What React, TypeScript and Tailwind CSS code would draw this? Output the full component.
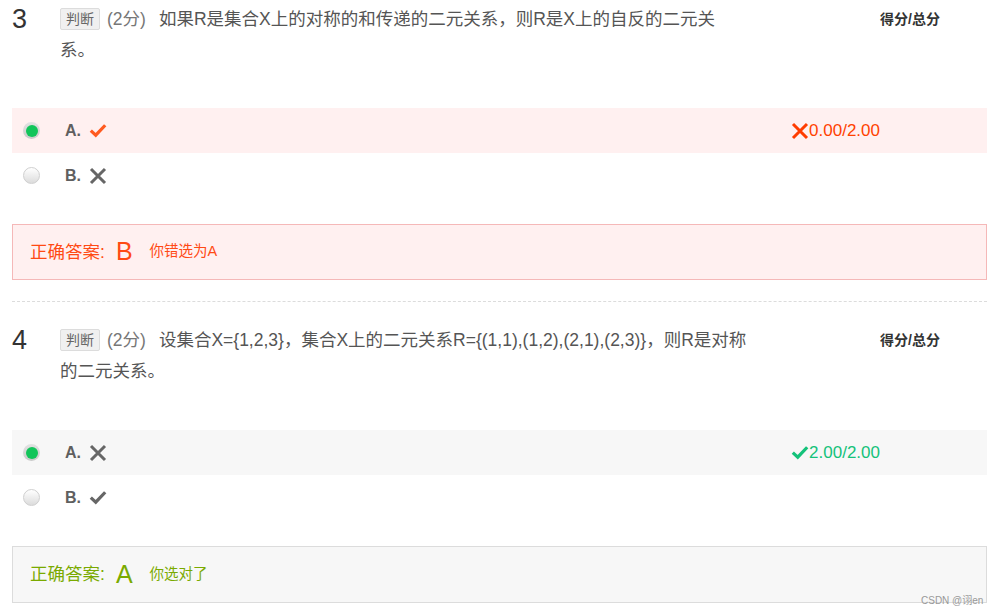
import React from "react";

const FONT = '"Liberation Sans", Arial, "Noto Sans CJK SC", sans-serif';

function CheckIcon({ color, size = 18 }: { color: string; size?: number }) {
  return (
    <svg width={size} height={size * 0.8} viewBox="0 0 20 16">
      <path d="M2 8.5 L7.5 13.5 L18 2.5" fill="none" stroke={color} strokeWidth="3.6" />
    </svg>
  );
}

function CrossIcon({ color, size = 18 }: { color: string; size?: number }) {
  return (
    <svg width={size} height={size} viewBox="0 0 18 18">
      <path d="M2 2 L16 16 M16 2 L2 16" fill="none" stroke={color} strokeWidth="3" />
    </svg>
  );
}

function Radio({ checked }: { checked: boolean }) {
  if (checked) {
    return (
      <div className="flex h-[17px] w-[17px] items-center justify-center rounded-full bg-gradient-to-b from-[#e2e2e2] to-[#c9c9c9]">
        <div className="h-[12px] w-[12px] rounded-full bg-[#12c55a]" />
      </div>
    );
  }
  return (
    <div className="h-[17px] w-[17px] rounded-full border border-[#cfcfcf] bg-gradient-to-b from-[#ffffff] to-[#dcdcdc]" />
  );
}

type Opt = { label: string; mark: "check" | "cross"; checked: boolean };

function OptionRow({
  opt,
  bg,
  markColor,
  score,
}: {
  opt: Opt;
  bg: string;
  markColor: string;
  score?: React.ReactNode;
}) {
  return (
    <div className={`flex h-[45px] items-center pl-[11px] pr-[107px] ${bg}`}>
      <Radio checked={opt.checked} />
      <span className="ml-[25px] text-[16px] font-bold text-[#5f5f5f]">{opt.label}</span>
      <span className="ml-[8px] flex items-center">
        {opt.mark === "check" ? <CheckIcon color={markColor} /> : <CrossIcon color={markColor} />}
      </span>
      <div className="flex-1" />
      {score}
    </div>
  );
}

function Header({ num, lines }: { num: string; lines: string[] }) {
  return (
    <div className="flex">
      <div className="w-[48px] text-[27px] leading-[31px] text-[#333]">{num}</div>
      <div className="w-[700px] text-[17.5px] leading-[31px] text-[#555]">
        <span className="mr-[7px] inline-block rounded-[2px] border border-[#dcdcdc] bg-[#f0f0f0] px-[5px] align-[1px] text-[14px] leading-[20px] text-[#666]">
          判断
        </span>
        <span className="mr-[13px] text-[#777]">(2分)</span>
        {lines[0]}
        <br />
        {lines[1]}
      </div>
      <div className="ml-[120px] text-[14px] font-bold leading-[31px] text-[#333]">得分/总分</div>
    </div>
  );
}

export default function App() {
  return (
    <div className="relative h-[615px] w-[999px] overflow-hidden bg-white px-3 pt-[4px]" style={{ fontFamily: FONT }}>
      {/* question 3 */}
      <Header
        num="3"
        lines={["如果R是集合X上的对称的和传递的二元关系，则R是X上的自反的二元关", "系。"]}
      />
      <div className="mt-[42px]">
        <OptionRow
          opt={{ label: "A.", mark: "check", checked: true }}
          bg="bg-[#fff0f0]"
          markColor="#ff5a1f"
          score={
            <span className="flex items-center text-[17px] text-[#ff4200]">
              <CrossIcon color="#ff3c00" size={18} />
              <span>0.00/2.00</span>
            </span>
          }
        />
        <OptionRow opt={{ label: "B.", mark: "cross", checked: false }} bg="bg-white" markColor="#666" />
      </div>
      <div className="mt-[26px] flex h-[56px] items-center border border-[#f5b8b8] bg-[#fff0f0] pl-[17px] text-[#ff4a14]">
        <span className="text-[17.5px]">正确答案:</span>
        <span className="ml-[11px] text-[25px]">B</span>
        <span className="ml-[17px] text-[14.5px]">你错选为A</span>
      </div>
      <div className="mt-[21px] border-t border-dashed border-[#dcdcdc]" />

      {/* question 4 */}
      <div className="pt-[23px]">
        <Header
          num="4"
          lines={["设集合X={1,2,3}，集合X上的二元关系R={(1,1),(1,2),(2,1),(2,3)}，则R是对称", "的二元关系。"]}
        />
      </div>
      <div className="mt-[43px]">
        <OptionRow
          opt={{ label: "A.", mark: "cross", checked: true }}
          bg="bg-[#f7f7f7]"
          markColor="#666"
          score={
            <span className="flex items-center text-[17px] text-[#14c27a]">
              <CheckIcon color="#14c27a" size={18} />
              <span>2.00/2.00</span>
            </span>
          }
        />
        <OptionRow opt={{ label: "B.", mark: "check", checked: false }} bg="bg-white" markColor="#666" />
      </div>
      <div className="mt-[26px] flex h-[57px] items-center border border-[#dcdcdc] bg-[#f7f7f7] pl-[17px] text-[#7aaa00]">
        <span className="text-[17.5px]">正确答案:</span>
        <span className="ml-[11px] text-[25px]">A</span>
        <span className="ml-[17px] text-[14.5px]">你选对了</span>
      </div>

      <div className="absolute left-[921px] top-[593px] text-[10px] text-[#999]">CSDN @诩en</div>
    </div>
  );
}
